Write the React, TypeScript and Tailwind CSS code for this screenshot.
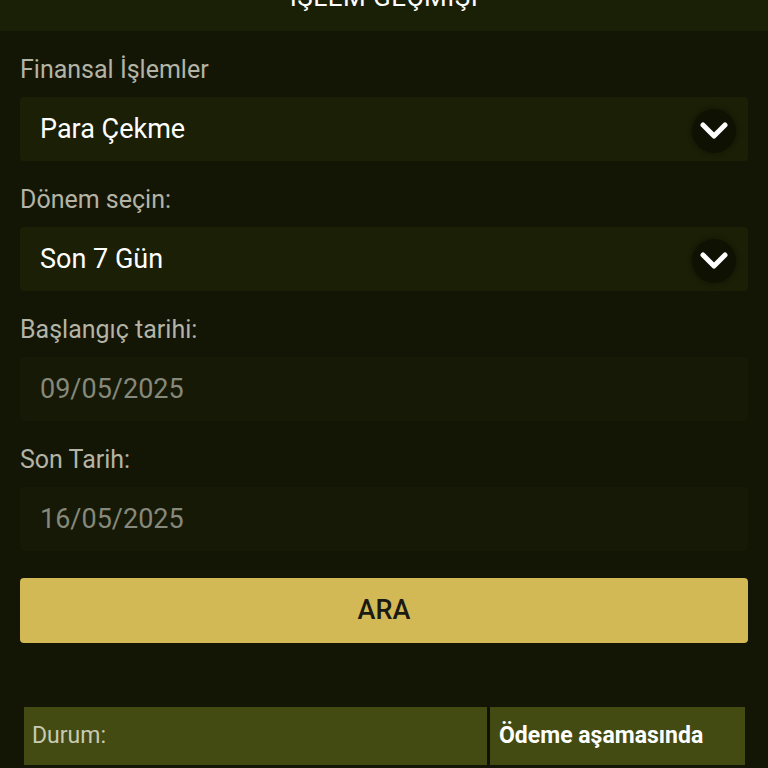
function Chevron() {
  return (
    <span className="flex items-center justify-center size-[44px] rounded-full bg-[#0f1203] shadow-[0_0_4px_1px_#10130399]">
      <svg width="28" height="18" viewBox="0 0 28 18" fill="none">
        <path d="M3 3l11 11L25 3" stroke="#ffffff" strokeWidth="5" strokeLinecap="round" strokeLinejoin="round" />
      </svg>
    </span>
  )
}

function Label({ children }: { children: React.ReactNode }) {
  return <div className="h-[26px] leading-[26px] text-[25px] text-[#b3b4a6]">{children}</div>
}

function Select({ value }: { value: string }) {
  return (
    <div className="mt-[14px] h-[64px] rounded-[4px] bg-[#1a1f06] flex items-center justify-between pl-5 pr-[12px]">
      <span className="text-[27px] text-white">{value}</span>
      <span className="mt-[4px]">
        <Chevron />
      </span>
    </div>
  )
}

function DateInput({ value }: { value: string }) {
  return (
    <div className="mt-[14px] h-[64px] rounded-[4px] bg-[#151906] flex items-center pl-5">
      <span className="text-[27px] text-[#85887a]">{value}</span>
    </div>
  )
}

export default function App() {
  return (
    <div className="min-h-[768px] bg-[#131605] font-['Roboto','Liberation_Sans',sans-serif]">
      {/* Header */}
      <header className="h-[31px] bg-[#1a2006] overflow-hidden flex justify-center">
        <div className="-mt-[16px] text-[26px] leading-none text-white tracking-[0.5px]">İŞLEM GEÇMİŞİ</div>
      </header>

      <div className="px-5 pt-[26px]">
        <Label>Finansal İşlemler</Label>
        <Select value="Para Çekme" />

        <div className="mt-[26px]">
          <Label>Dönem seçin:</Label>
        </div>
        <Select value="Son 7 Gün" />

        <div className="mt-[26px]">
          <Label>Başlangıç tarihi:</Label>
        </div>
        <DateInput value="09/05/2025" />

        <div className="mt-[26px]">
          <Label>Son Tarih:</Label>
        </div>
        <DateInput value="16/05/2025" />

        <button
          type="button"
          className="mt-[27px] w-full h-[65px] rounded-[4px] bg-[#d3b955] text-[27px] font-medium text-[#1a1a12]"
        >
          ARA
        </button>

        {/* Result row */}
        <div className="mt-[64px] ml-1 mr-[3px] flex gap-[3px] bg-[#0f1203] h-[58px]">
          <div className="flex-1 bg-[#434b13] flex items-center pl-2 text-[23px] text-[#c9cab4]">Durum:</div>
          <div className="w-[255px] bg-[#434b13] flex items-center pl-[9px] text-[23px] font-bold text-white">
            Ödeme aşamasında
          </div>
        </div>
      </div>
    </div>
  )
}
